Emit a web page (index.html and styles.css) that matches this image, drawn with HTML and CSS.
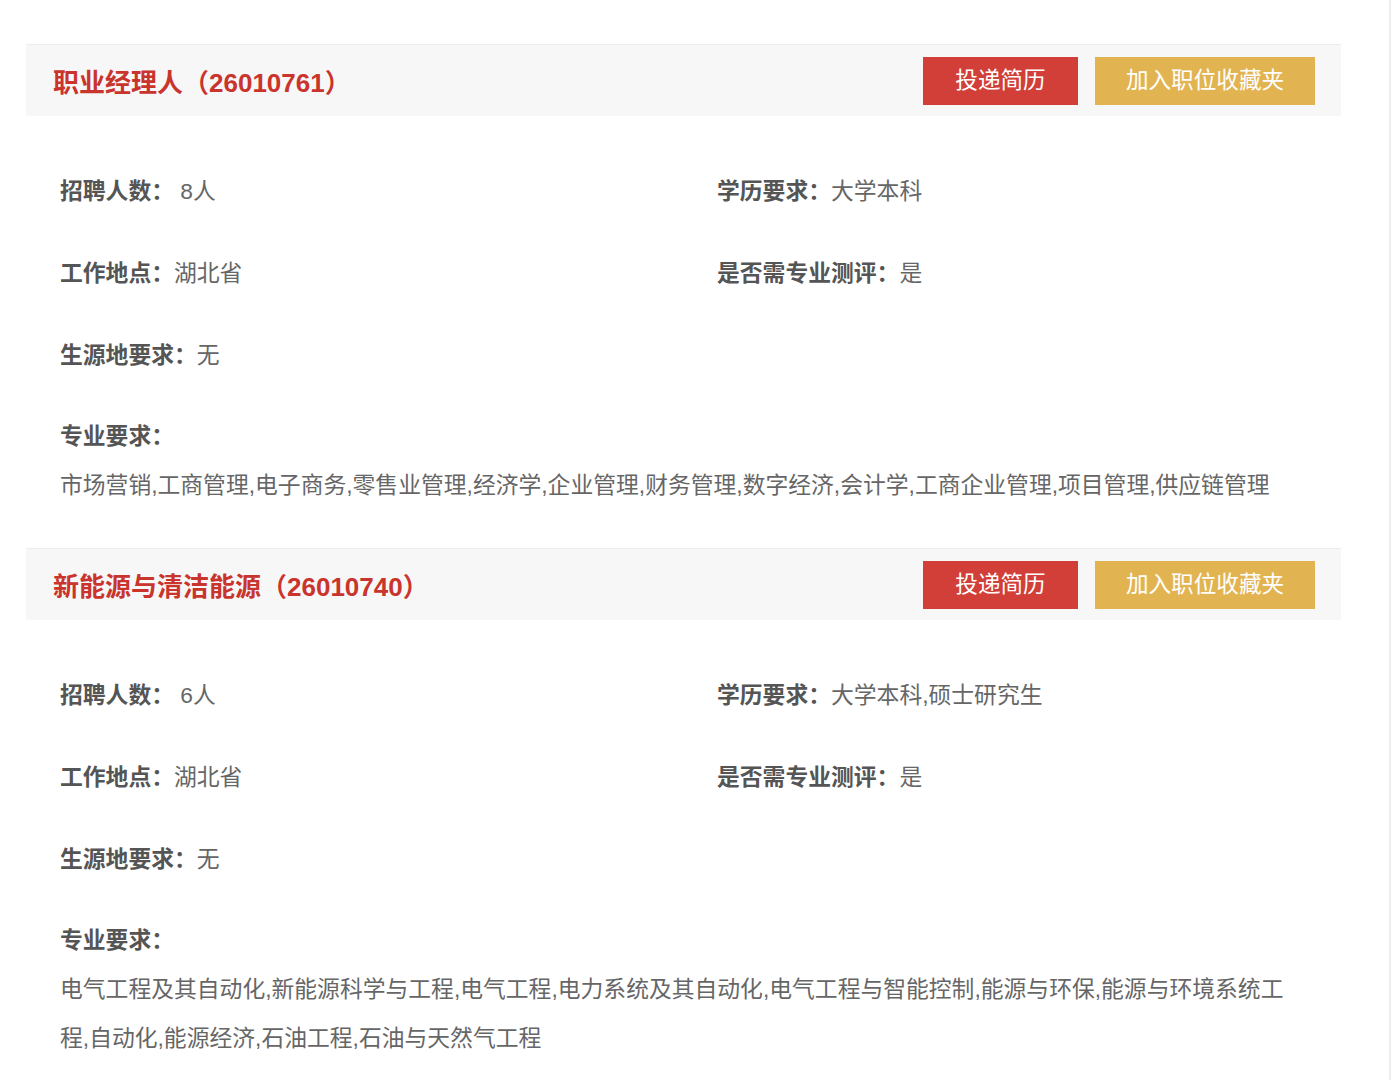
FILE: index.html
```html
<!DOCTYPE html>
<html lang="zh-CN">
<head>
	<meta charset="UTF-8">
	<title>职位列表</title>
	<link rel="stylesheet" href="styles.css">
</head>
<body>
	<div class="page">
		<div class="job">
			<div class="job-head">
				<h2 class="job-title">职业经理人（26010761）</h2>
				<div class="job-btns">
					<a href="javascript:;" class="btn btn-apply">投递简历</a>
					<a href="javascript:;" class="btn btn-fav">加入职位收藏夹</a>
				</div>
			</div>
			<div class="job-body">
				<div class="info-grid">
					<div class="info-item"><span class="label">招聘人数：</span> 8人</div>
					<div class="info-item"><span class="label">学历要求：</span>大学本科</div>
					<div class="info-item"><span class="label">工作地点：</span>湖北省</div>
					<div class="info-item"><span class="label">是否需专业测评：</span>是</div>
					<div class="info-item"><span class="label">生源地要求：</span>无</div>
				</div>
				<div class="major">
					<div class="label">专业要求：</div>
					<p class="major-text">市场营销,工商管理,电子商务,零售业管理,经济学,企业管理,财务管理,数字经济,会计学,工商企业管理,项目管理,供应链管理</p>
				</div>
			</div>
		</div>

		<div class="job">
			<div class="job-head">
				<h2 class="job-title">新能源与清洁能源（26010740）</h2>
				<div class="job-btns">
					<a href="javascript:;" class="btn btn-apply">投递简历</a>
					<a href="javascript:;" class="btn btn-fav">加入职位收藏夹</a>
				</div>
			</div>
			<div class="job-body">
				<div class="info-grid">
					<div class="info-item"><span class="label">招聘人数：</span> 6人</div>
					<div class="info-item"><span class="label">学历要求：</span>大学本科,硕士研究生</div>
					<div class="info-item"><span class="label">工作地点：</span>湖北省</div>
					<div class="info-item"><span class="label">是否需专业测评：</span>是</div>
					<div class="info-item"><span class="label">生源地要求：</span>无</div>
				</div>
				<div class="major">
					<div class="label">专业要求：</div>
					<p class="major-text">电气工程及其自动化,新能源科学与工程,电气工程,电力系统及其自动化,电气工程与智能控制,能源与环保,能源与环境系统工程,自动化,能源经济,石油工程,石油与天然气工程</p>
				</div>
			</div>
		</div>
	</div>
</body>
</html>
```

FILE: styles.css
```css
*{margin:0; padding:0;}
html,body{background:#fff; overflow:hidden;}
body{font-family:"Liberation Sans","Noto Sans CJK SC",sans-serif;}
a{text-decoration:none;}

.page{
	width:1391px;
	min-height:1080px;
	border-right:solid 2px #ededed;
	padding:44px 0 0 26px;
	box-sizing:border-box;
}
.job{
	width:1315px;
}
.job-head{
	height:72px;
	box-sizing:border-box;
	border-top:solid 1px #ececec;
	background:#f7f7f7;
	display:flex;
	align-items:center;
	justify-content:space-between;
	padding:0 26px 0 27px;
}
.job-title{
	font-size:26px;
	font-weight:bold;
	color:#c9342c;
}
.job-btns{
	display:flex;
	gap:17px;
}
.btn{
	display:block;
	height:48px;
	line-height:48px;
	font-size:22.6px;
	color:#fff;
	text-align:center;
}
.btn-apply{
	width:155px;
	background:#d13f38;
}
.btn-fav{
	width:220px;
	background:#e2b451;
}
.job-body{
	padding:34px 46px 38px 34px;
	color:#666;
	font-size:22.8px;
}
.info-grid{
	display:grid;
	grid-template-columns:657px 1fr;
	grid-auto-rows:82px;
}
.info-item{
	line-height:82px;
	white-space:nowrap;
}
.label{
	font-weight:bold;
	color:#555;
}
.major{
	margin-top:15px;
}
.major .label{
	line-height:50px;
}
.major-text{
	line-height:49px;
}
```
